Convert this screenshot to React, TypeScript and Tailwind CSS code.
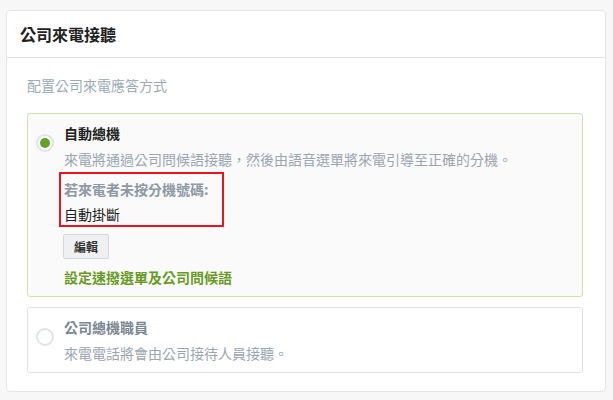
import React, { useState } from 'react';

const font = { fontFamily: '"Noto Sans CJK TC", "Noto Sans", sans-serif' };

const Radio: React.FC<{ checked: boolean }> = ({ checked }) => (
  <div className="w-[18px] h-[18px] rounded-full border-[2px] border-[#dfe4e8] bg-white flex items-center justify-center shrink-0 mt-[11px]">
    {checked && <div className="w-[10px] h-[10px] rounded-full bg-[#67a128]" />}
  </div>
);

const App: React.FC = () => {
  const [mode, setMode] = useState<'auto' | 'staff'>('auto');

  return (
    <div className="w-[613px] h-[400px] bg-[#f7f7f7] pt-[10px] pl-[6px] pr-[7px]" style={font}>
      <div className="bg-white border border-[#e6e6e6] rounded-[4px] h-[382px]">
        <div className="h-[47px] flex items-center pl-[13px] border-b border-[#e3e3e3]">
          <h2 className="text-[16px] font-bold text-[#222]">公司來電接聽</h2>
        </div>

        <div className="pl-[20px] pr-[22px] pt-[17px]">
          <p className="text-[14px] leading-[20px] text-[#9cabb8]">配置公司來電應答方式</p>

          <div
            onClick={() => setMode('auto')}
            className="mt-[18px] border border-[#cfe5b0] bg-[#fafafa] rounded-[3px] flex pl-[8px] pt-[9px] pb-[9px]"
          >
            <Radio checked={mode === 'auto'} />
            <div className="ml-[10px] text-[14px] leading-[20px]">
              <div className="font-bold text-[#222]">自動總機</div>
              <div className="mt-[6px] text-[#9aa6b1]">來電將通過公司問候語接聽，然後由語音選單將來電引導至正確的分機。</div>
              <div className="mt-[3px] -ml-[5px] w-[165px] border-2 border-[#e8141f] pl-[3px] pt-[5px] pb-[1px]">
                <div className="font-bold text-[#8d99a4]">若來電者未按分機號碼:</div>
                <div className="mt-[5px] text-[#222]">自動掛斷</div>
              </div>
              <button className="mt-[7px] -ml-[1px] h-[25px] px-[10px] border border-[#d4d8dc] bg-[#eef0f2] rounded-[2px] text-[12px] font-bold text-[#333]">
                編輯
              </button>
              <div className="mt-[8px] font-bold text-[#6a9a26]">設定速撥選單及公司問候語</div>
            </div>
          </div>

          <div
            onClick={() => setMode('staff')}
            className="mt-[10px] border border-[#dde3e7] bg-white rounded-[3px] flex pl-[8px] pt-[9px] pb-[9px]"
          >
            <Radio checked={mode === 'staff'} />
            <div className="ml-[10px] text-[14px] leading-[20px]">
              <div className="font-bold text-[#7a8791]">公司總機職員</div>
              <div className="mt-[6px] text-[#9aa6b1]">來電電話將會由公司接待人員接聽。</div>
            </div>
          </div>
        </div>
      </div>
    </div>
  );
};

export default App;
